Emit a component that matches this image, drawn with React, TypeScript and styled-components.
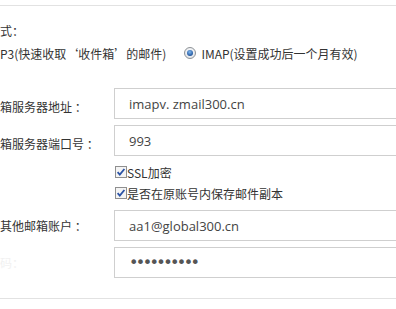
import React from "react";
import styled, { createGlobalStyle } from "styled-components";

const Global = createGlobalStyle`
  html, body { margin: 0; padding: 0; background: #fff; overflow: hidden; }
  body {
    width: 396px; height: 309px;
    font-family: "Segoe UI", "Open Sans", "Noto Sans CJK SC", sans-serif;
    font-size: 12px; color: #333;
  }
`;

const Page = styled.div`
  display: flex;
  flex-direction: column;
  padding-top: 5px;
  width: 396px;
  overflow: hidden;
`;

const Divider = styled.div<{ $mt?: number }>`
  height: 1px;
  background: #e2e2e2;
  margin-top: ${(p) => p.$mt ?? 0}px;
`;

const Title = styled.div`
  height: 24px;
  line-height: 24px;
  margin-top: 13px;
  font-family: "Noto Sans CJK SC", sans-serif;
`;

const RadioRow = styled.div`
  display: flex;
  align-items: center;
  height: 20px;
  font-family: "Noto Sans CJK SC", sans-serif;
`;

const RadioOption = styled.label<{ $gap: number }>`
  display: flex;
  align-items: center;
  gap: 5px;
  margin-left: ${(p) => p.$gap}px;
  white-space: nowrap;
`;

const Form = styled.div`
  display: grid;
  grid-template-columns: 114px 1fr;
  align-items: center;
  margin-top: 25px;
`;

const Label = styled.div<{ $faint?: boolean }>`
  font-family: "Noto Sans CJK SC", sans-serif;
  color: ${(p) => (p.$faint ? "#f1f1f1" : "#333")};
  white-space: nowrap;
`;

const Field = styled.div<{ $mt?: number; $mb: number }>`
  box-sizing: border-box;
  height: 31px;
  border: 1px solid #cfcfcf;
  border-right: none;
  padding-left: 14px;
  display: flex;
  align-items: center;
  font-size: 13px;
  color: #444;
  margin-top: ${(p) => p.$mt ?? 0}px;
  margin-bottom: ${(p) => p.$mb}px;
  white-space: nowrap;
`;

const Dots = styled.span`
  font-family: "DejaVu Sans", sans-serif;
  font-size: 16px;
  letter-spacing: -2.6px;
  color: #555;
`;

const CheckRow = styled.label<{ $h: number }>`
  display: flex;
  align-items: center;
  height: ${(p) => p.$h}px;
  margin-left: 1px;
  font-family: "Noto Sans CJK SC", sans-serif;
  white-space: nowrap;
`;

const Spacer = styled.div``;

const Radio = () => (
  <svg width="12" height="12" viewBox="0 0 12 12">
    <defs>
      <radialGradient id="rg" cx="50%" cy="40%" r="60%">
        <stop offset="0%" stopColor="#ffffff" />
        <stop offset="100%" stopColor="#dfe3e8" />
      </radialGradient>
      <radialGradient id="dot" cx="45%" cy="35%" r="65%">
        <stop offset="0%" stopColor="#7fb8f0" />
        <stop offset="100%" stopColor="#1c4f97" />
      </radialGradient>
    </defs>
    <circle cx="6" cy="6" r="5.5" fill="url(#rg)" stroke="#8e9296" />
    <circle cx="6" cy="6" r="3" fill="url(#dot)" />
  </svg>
);

const Check = () => (
  <svg width="12" height="12" viewBox="0 0 12 12">
    <rect x="0.5" y="0.5" width="11" height="11" fill="#f4f4f4" stroke="#8f8f8f" />
    <path d="M2.6 6.2 L4.8 8.6 L9.4 3" fill="none" stroke="#2a52a5" strokeWidth="1.8" />
  </svg>
);

export default function App() {
  return (
    <>
      <Global />
      <Page>
        <Divider />
        <Title>式：</Title>
        <RadioRow>
          <span>P3(快速收取‘收件箱’的邮件)</span>
          <RadioOption $gap={18}>
            <Radio />
            <span>IMAP(设置成功后一个月有效)</span>
          </RadioOption>
        </RadioRow>
        <Form>
          <Label>箱服务器地址 ：</Label>
          <Field $mb={6}>imapv. zmail300.cn</Field>
          <Label>箱服务器端口号 ：</Label>
          <Field $mb={6}>993</Field>
          <Spacer />
          <CheckRow $h={20}>
            <Check />
            <span>SSL加密</span>
          </CheckRow>
          <Spacer />
          <CheckRow $h={22}>
            <Check />
            <span>是否在原账号内保存邮件副本</span>
          </CheckRow>
          <Label>其他邮箱账户 ：</Label>
          <Field $mt={6} $mb={6}>aa1@global300.cn</Field>
          <Label $faint>码：</Label>
          <Field $mb={0}>
            <Dots>••••••••••</Dots>
          </Field>
        </Form>
        <Divider $mt={20} />
      </Page>
    </>
  );
}
